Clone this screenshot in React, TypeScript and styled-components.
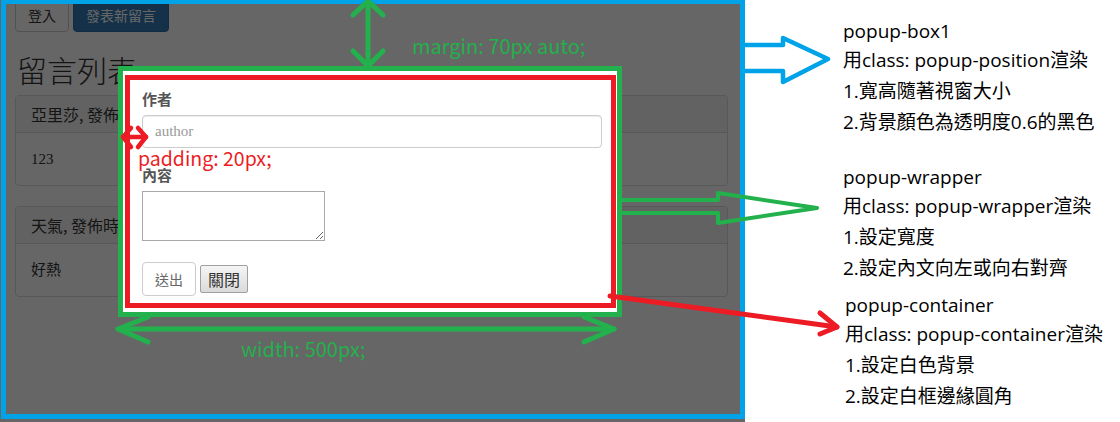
import React from "react";
import styled, { createGlobalStyle } from "styled-components";

const GlobalStyle = createGlobalStyle`
  html, body { margin: 0; padding: 0; background: #ffffff; }
  body { font-family: "Noto Sans CJK TC", "Noto Sans", sans-serif; }
  * { box-sizing: border-box; }
`;

const BLUE = "#00a2e8";
const GREEN = "#22b14c";
const RED = "#ed1c24";
const NOTE_FONT = `"Open Sans", "Noto Sans CJK TC", sans-serif`;
const CALLOUT_FONT = `"Noto Sans CJK TC", "Noto Sans", sans-serif`;

const Page = styled.div`
  position: relative;
  width: 1120px;
  height: 422px;
  overflow: hidden;
  display: flex;
  align-items: flex-start;
`;

const ScreenColumn = styled.div`
  width: 745px;
  height: 422px;
  flex: none;
  background: #666666;
`;

const Frame = styled.div`
  position: relative;
  margin-left: 1px;
  width: 744px;
  height: 419px;
  border: 5px solid ${BLUE};
  border-top-width: 4px;
  overflow: hidden;
  background: #ffffff;
`;

const Site = styled.div`
  display: flow-root;
  height: 100%;
  background: #ffffff;
  padding: 0 12px 0 9px;
  color: #333333;
`;

const Toolbar = styled.div`
  display: flex;
  gap: 4px;
  margin-top: -6px;
`;

const SiteButton = styled.button<{ $primary?: boolean }>`
  height: 34px;
  padding: 6px 12px;
  font-family: "Noto Sans CJK TC", sans-serif;
  font-size: 14px;
  line-height: 20px;
  border-radius: 4px;
  border: 1px solid ${(p) => (p.$primary ? "#2e6da4" : "#cccccc")};
  background: ${(p) => (p.$primary ? "#337ab7" : "#ffffff")};
  color: ${(p) => (p.$primary ? "#ffffff" : "#333333")};
`;

const Heading = styled.h2`
  margin: 21px 0 9px 2px;
  font-size: 30px;
  line-height: 33px;
  font-weight: 300;
  color: #333333;
`;

const Panel = styled.section`
  border: 1px solid #dddddd;
  border-radius: 4px;
  margin-bottom: 20px;
  overflow: hidden;
`;

const PanelHeading = styled.div`
  background: #f5f5f5;
  border-bottom: 1px solid #dddddd;
  padding: 10px 15px;
  font-size: 16px;
  line-height: 16px;
  white-space: nowrap;
`;

const PanelBody = styled.div`
  padding: 15px;
  font-family: "Liberation Serif", "Noto Sans CJK TC", serif;
  font-size: 15px;
  line-height: 22px;
`;

const Overlay = styled.div`
  position: absolute;
  inset: 0;
  background: rgba(0, 0, 0, 0.6);
`;

const Wrapper = styled.div`
  margin: 62px 0 0 112px;
  width: 504px;
  border: 5px solid ${GREEN};
`;

const Container = styled.div`
  position: relative;
  background: #ffffff;
  padding: 18px 15px 16px 19px;
`;

const ContainerOutline = styled.div`
  position: absolute;
  top: 4px;
  left: 2px;
  right: 1px;
  bottom: 4px;
  border: 5px solid ${RED};
  pointer-events: none;
`;

const FormGroup = styled.div<{ $gap: number }>`
  margin-bottom: ${(p) => p.$gap}px;
`;

const Label = styled.label`
  display: block;
  font-size: 15px;
  line-height: 20px;
  font-weight: 700;
  color: #555555;
  margin-bottom: 6px;
`;

const TextInput = styled.input`
  display: block;
  width: 100%;
  height: 33px;
  padding: 6px 12px;
  border: 1px solid #cccccc;
  border-radius: 4px;
  box-shadow: inset 0 1px 1px rgba(0, 0, 0, 0.075);
  font-family: "Liberation Serif", serif;
  font-size: 15px;
  &::placeholder { color: #999999; }
`;

const TextArea = styled.textarea`
  display: block;
  width: 183px;
  height: 50px;
  border: 1px solid #a9a9a9;
  margin: 0;
`;

const Actions = styled.div`
  display: flex;
  align-items: center;
  gap: 4px;
`;

const SubmitButton = styled.button`
  width: 54px;
  height: 34px;
  border: 1px solid #cccccc;
  border-radius: 4px;
  background: #ffffff;
  color: #666666;
  font-family: "Noto Sans CJK TC", sans-serif;
  font-size: 14px;
  padding: 0;
`;

const CloseButton = styled.button`
  width: 48px;
  height: 28px;
  border: 1px solid #a0a0a0;
  border-radius: 2px;
  background: linear-gradient(#f5f5f5, #dadada);
  color: #333333;
  font-family: "Noto Sans CJK TC", sans-serif;
  font-size: 16px;
  padding: 0;
`;

const Notes = styled.div`
  margin-left: 98px;
  display: flex;
  flex-direction: column;
  font-family: ${NOTE_FONT};
  color: #000000;
`;

const NoteGroup = styled.div<{ $top: number; $indent?: number }>`
  margin-top: ${(p) => p.$top}px;
  margin-left: ${(p) => p.$indent ?? 0}px;
`;

const NoteTitle = styled.div`
  font-size: 19px;
  line-height: 28px;
  white-space: nowrap;
`;

const NoteLine = styled.div`
  font-size: 19px;
  line-height: 31px;
  white-space: nowrap;
`;

const Callout = styled.div<{ $x: number; $y: number; $color: string; $size: number }>`
  position: absolute;
  left: ${(p) => p.$x}px;
  top: ${(p) => p.$y}px;
  color: ${(p) => p.$color};
  font-family: ${CALLOUT_FONT};
  font-size: ${(p) => p.$size}px;
  line-height: 1;
  white-space: nowrap;
  pointer-events: none;
`;

const ArrowLayer = styled.svg`
  position: absolute;
  left: 0;
  top: 0;
  pointer-events: none;
`;

const notes = [
  {
    top: 17,
    indent: 0,
    title: "popup-box1",
    lines: ["用class: popup-position渲染", "1.寬高隨著視窗大小", "2.背景顏色為透明度0.6的黑色"],
  },
  {
    top: 25,
    indent: 0,
    title: "popup-wrapper",
    lines: ["用class: popup-wrapper渲染", "1.設定寬度", "2.設定內文向左或向右對齊"],
  },
  {
    top: 7,
    indent: 2,
    title: "popup-container",
    lines: ["用class: popup-container渲染", "1.設定白色背景", "2.設定白框邊緣圓角"],
  },
];

const posts = [
  { title: "亞里莎, 發佈時間", body: "123" },
  { title: "天氣, 發佈時間", body: "好熱" },
];

export default function App() {
  return (
    <>
      <GlobalStyle />
      <Page>
        <ScreenColumn>
          <Frame>
            <Site>
              <Toolbar>
                <SiteButton>登入</SiteButton>
                <SiteButton $primary>發表新留言</SiteButton>
              </Toolbar>
              <Heading>留言列表</Heading>
              {posts.map((p) => (
                <Panel key={p.body}>
                  <PanelHeading>{p.title}</PanelHeading>
                  <PanelBody>{p.body}</PanelBody>
                </Panel>
              ))}
            </Site>
            <Overlay>
              <Wrapper>
                <Container>
                  <FormGroup $gap={17}>
                    <Label>作者</Label>
                    <TextInput placeholder="author" />
                  </FormGroup>
                  <FormGroup $gap={21}>
                    <Label>內容</Label>
                    <TextArea />
                  </FormGroup>
                  <Actions>
                    <SubmitButton>送出</SubmitButton>
                    <CloseButton>關閉</CloseButton>
                  </Actions>
                  <ContainerOutline />
                </Container>
              </Wrapper>
            </Overlay>
          </Frame>
        </ScreenColumn>
        <Notes>
          {notes.map((n) => (
            <NoteGroup key={n.title} $top={n.top} $indent={n.indent}>
              <NoteTitle>{n.title}</NoteTitle>
              {n.lines.map((l) => (
                <NoteLine key={l}>{l}</NoteLine>
              ))}
            </NoteGroup>
          ))}
        </Notes>

        <Callout $x={412} $y={36} $color={GREEN} $size={20}>margin: 70px auto;</Callout>
        <Callout $x={241} $y={339} $color={GREEN} $size={20}>width: 500px;</Callout>
        <Callout $x={138} $y={148} $color={RED} $size={19.5}>padding: 20px;</Callout>

        <ArrowLayer width="1120" height="422" viewBox="0 0 1120 422">
          <g fill="none" strokeLinecap="round" strokeLinejoin="round">
            <polyline
              points="745,45 783,45 783,38 828,59 783,82 783,71 745,71"
              stroke={BLUE}
              strokeWidth="4.5"
              strokeLinecap="butt"
            />
            <polyline
              points="622,200 718,200 718,193 817,208 718,223 718,213 622,213"
              stroke={GREEN}
              strokeWidth="4"
              strokeLinecap="butt"
            />
            <g stroke={RED} strokeWidth="5">
              <line x1="610" y1="296" x2="837" y2="327" />
              <polyline points="820,313 837,327 820,334" />
            </g>
            <g stroke={GREEN} strokeWidth="5">
              <line x1="368" y1="1" x2="368" y2="66" />
              <polyline points="353,15 368,1 383,15" />
              <polyline points="353,51 368,66 383,51" />
            </g>
            <g stroke={GREEN} strokeWidth="5">
              <line x1="118" y1="329" x2="614" y2="329" />
              <polyline points="148,317 118,329 148,342" />
              <polyline points="584,317 614,329 584,342" />
            </g>
            <g stroke={RED} strokeWidth="4.5">
              <line x1="123" y1="137" x2="146" y2="137" />
              <polyline points="131,128 123,137 131,147" />
              <polyline points="138,128 146,137 138,147" />
            </g>
          </g>
        </ArrowLayer>
      </Page>
    </>
  );
}
